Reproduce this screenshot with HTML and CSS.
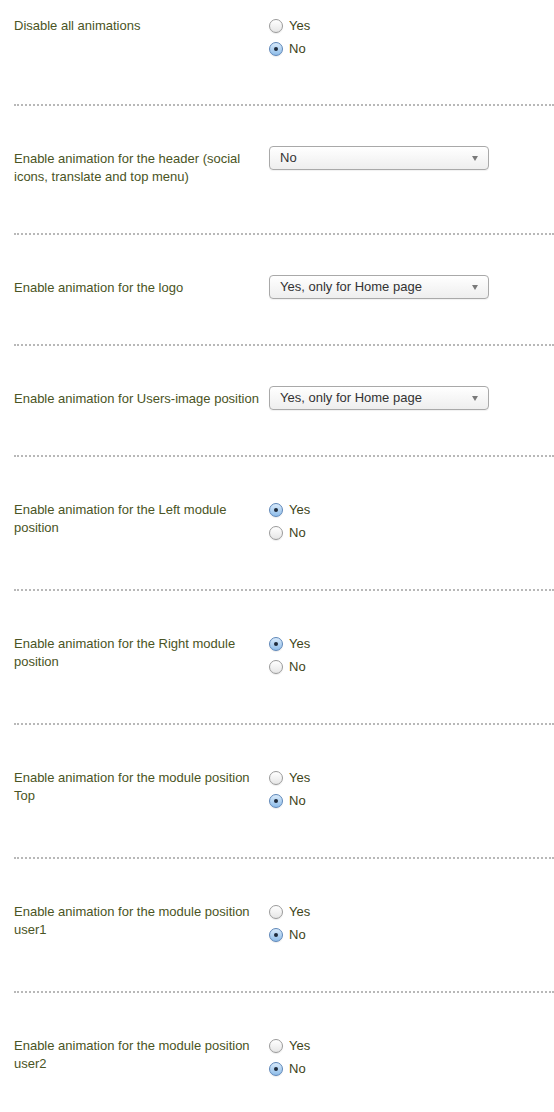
FILE: index.html
```html
<!DOCTYPE html>
<html lang="en">
<head>
  <meta charset="UTF-8">
  <title>Animation settings</title>
  <link rel="stylesheet" href="styles.css">
</head>
<body>
<div class="settings">
  <div class="row first">
    <div class="label">Disable all animations</div>
    <div class="control">
      <div class="radio"><span class="dot"></span>Yes</div>
      <div class="radio"><span class="dot on"></span>No</div>
    </div>
  </div>
  <div class="row">
    <div class="label">Enable animation for the header (social icons, translate and top menu)</div>
    <div class="control">
      <div class="select">No<span class="arrow"></span></div>
    </div>
  </div>
  <div class="row">
    <div class="label">Enable animation for the logo</div>
    <div class="control">
      <div class="select">Yes, only for Home page<span class="arrow"></span></div>
    </div>
  </div>
  <div class="row">
    <div class="label">Enable animation for Users-image position</div>
    <div class="control">
      <div class="select">Yes, only for Home page<span class="arrow"></span></div>
    </div>
  </div>
  <div class="row">
    <div class="label">Enable animation for the Left module position</div>
    <div class="control">
      <div class="radio"><span class="dot on"></span>Yes</div>
      <div class="radio"><span class="dot"></span>No</div>
    </div>
  </div>
  <div class="row">
    <div class="label">Enable animation for the Right module position</div>
    <div class="control">
      <div class="radio"><span class="dot on"></span>Yes</div>
      <div class="radio"><span class="dot"></span>No</div>
    </div>
  </div>
  <div class="row">
    <div class="label">Enable animation for the module position Top</div>
    <div class="control">
      <div class="radio"><span class="dot"></span>Yes</div>
      <div class="radio"><span class="dot on"></span>No</div>
    </div>
  </div>
  <div class="row">
    <div class="label">Enable animation for the module position user1</div>
    <div class="control">
      <div class="radio"><span class="dot"></span>Yes</div>
      <div class="radio"><span class="dot on"></span>No</div>
    </div>
  </div>
  <div class="row last">
    <div class="label">Enable animation for the module position user2</div>
    <div class="control">
      <div class="radio"><span class="dot"></span>Yes</div>
      <div class="radio"><span class="dot on"></span>No</div>
    </div>
  </div>
</div>
</body>
</html>
```

FILE: styles.css
```css
body {
  margin: 0;
  padding: 0;
  background: #fff;
  font-family: "Liberation Sans", Arial, sans-serif;
  font-size: 13px;
  color: #4a5424;
}

.settings {
  padding-left: 14px;
}

.row {
  display: flex;
  align-items: flex-start;
  padding: 44px 0 47px;
  border-bottom: 2px dotted #b8b8b8;
}

.row.first {
  padding-top: 17px;
  padding-bottom: 46px;
}

.row.last {
  border-bottom: none;
}

.label {
  width: 255px;
  line-height: 18px;
  flex: none;
}

.control {
  display: flex;
  flex-direction: column;
  gap: 5px;
}

.radio {
  display: flex;
  align-items: center;
  height: 18px;
  line-height: 18px;
  color: #3d4419;
}

.dot {
  width: 12px;
  height: 12px;
  border: 1px solid #9a9a9a;
  border-radius: 50%;
  background: linear-gradient(#ffffff, #e6e6e6);
  box-shadow: 0 1px 1px rgba(0, 0, 0, 0.08);
  margin: 0 6px 0 0;
  position: relative;
  flex: none;
}

.dot.on {
  border-color: #5d86b8;
  background: linear-gradient(#d8eafb, #8fbde9);
}

.dot.on::after {
  content: "";
  position: absolute;
  left: 4px;
  top: 4px;
  width: 4px;
  height: 4px;
  border-radius: 50%;
  background: #1e2a3a;
}

.select {
  width: 208px;
  height: 22px;
  line-height: 22px;
  margin: -4px 0 -2px;
  padding: 0 0 0 10px;
  border: 1px solid #a9a9a9;
  border-radius: 4px;
  background: linear-gradient(#ffffff, #eeeeee);
  box-shadow: 0 1px 1px rgba(0, 0, 0, 0.06);
  color: #333;
  position: relative;
}

.arrow {
  position: absolute;
  right: 10px;
  top: 9px;
  border-left: 3px solid transparent;
  border-right: 3px solid transparent;
  border-top: 5px solid #7a7a7a;
}
```
